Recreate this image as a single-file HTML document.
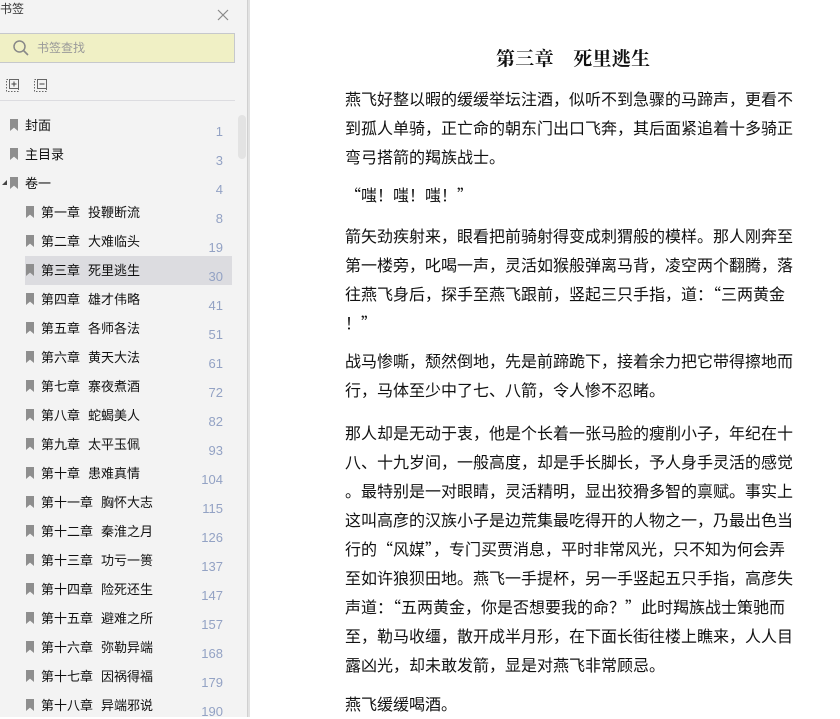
<!DOCTYPE html>
<html><head><meta charset="utf-8"><style>
*{margin:0;padding:0;box-sizing:border-box}
body{width:840px;height:717px;overflow:hidden;background:#fff;font-family:"Noto Sans CJK SC","Liberation Sans",sans-serif;position:relative}
#side{position:absolute;left:0;top:0;width:248px;height:717px;background:#f3f3f3;border-right:1px solid #d0d0d0}
#sep{position:absolute;left:248px;top:0;width:2px;height:717px;background:#e2e2e2}
.it{position:absolute;height:28px;font-size:13px;color:#111;line-height:28px;white-space:pre}
.it span{margin-left:8px}
.bm{position:absolute;top:8px;width:8px;height:12px;background:#8e8e8e;clip-path:polygon(0 0,100% 0,100% 100%,50% 72%,0 100%)}
.pn{position:absolute;right:24px;font-size:13px;color:#93a2c4;white-space:nowrap;font-family:"Liberation Sans",sans-serif}
#main{position:absolute;left:345px;top:0;width:460px;font-size:16px;color:#111;line-height:29px;white-space:nowrap}
p{position:absolute;left:0}
</style></head><body>
<div id="side">
<div style="position:absolute;left:0;top:0;font-size:12px;color:#333;line-height:18px">书签</div>
<div style="position:absolute;left:217px;top:2px;width:12px;height:12px">
<svg width="12" height="12"><path d="M1 1L11 11M11 1L1 11" stroke="#888" stroke-width="1.2"/></svg></div>
<div style="position:absolute;left:0;top:33px;width:235px;height:30px;background:#f0f0c5;border:1px solid #c6c8cc;border-left:none"></div>
<svg style="position:absolute;left:12px;top:39px" width="18" height="18"><circle cx="7.5" cy="7.5" r="5.5" fill="none" stroke="#888" stroke-width="1.5"/><path d="M11.5 11.5L16 16" stroke="#888" stroke-width="1.6"/></svg>
<div style="position:absolute;left:37px;top:39px;font-size:12px;color:#999">书签查找</div>
<svg style="position:absolute;left:5px;top:78px" width="50" height="16"><rect x="1.5" y="1.5" width="12" height="12" fill="none" stroke="#666" stroke-dasharray="1.5 1.5"/><rect x="4.5" y="1.5" width="9" height="9" fill="#f3f3f3" stroke="#666"/><path d="M6.5 6h5M9 3.5v5" stroke="#444"/><rect x="29.5" y="1.5" width="12" height="12" fill="none" stroke="#666" stroke-dasharray="1.5 1.5"/><rect x="32.5" y="1.5" width="9" height="9" fill="#f3f3f3" stroke="#666"/><path d="M34.5 6h5" stroke="#444"/></svg>
<div style="position:absolute;left:0;top:100px;width:235px;height:1px;background:#dcdce0"></div>
<div style="position:absolute;left:238px;top:115px;width:8px;height:44px;background:#e3e3e3;border-radius:4px"></div>
<div style="position:absolute;left:25px;top:256px;width:207px;height:29px;background:#dcdce0"></div>
<div id="items"></div>
</div>
<div id="sep"></div>
<div id="main">
<div style="position:absolute;left:151px;top:43px;font-size:19px;font-weight:bold;font-family:'Noto Serif CJK SC',serif;letter-spacing:0.3px">第三章　死里逃生</div>
<p style="top:84px">燕飞好整以暇的缓缓举坛注酒，似听不到急骤的马蹄声，更看不<br>到孤人单骑，正亡命的朝东门出口飞奔，其后面紧追着十多骑正<br>弯弓搭箭的羯族战士。</p>
<p style="top:180px">“嗤！嗤！嗤！”</p>
<p style="top:221px">箭矢劲疾射来，眼看把前骑射得变成刺猬般的模样。那人刚奔至<br>第一楼旁，叱喝一声，灵活如猴般弹离马背，凌空两个翻腾，落<br>往燕飞身后，探手至燕飞跟前，竖起三只手指，道：“三两黄金<br>！”</p>
<p style="top:346px">战马惨嘶，颓然倒地，先是前蹄跪下，接着余力把它带得擦地而<br>行，马体至少中了七、八箭，令人惨不忍睹。</p>
<p style="top:418px">那人却是无动于衷，他是个长着一张马脸的瘦削小子，年纪在十<br>八、十九岁间，一般高度，却是手长脚长，予人身手灵活的感觉<br>。最特别是一对眼睛，灵活精明，显出狡猾多智的禀赋。事实上<br>这叫高彦的汉族小子是边荒集最吃得开的人物之一，乃最出色当<br>行的“风媒”，专门买贾消息，平时非常风光，只不知为何会弄<br>至如许狼狈田地。燕飞一手提杯，另一手竖起五只手指，高彦失<br>声道：“五两黄金，你是否想要我的命？”此时羯族战士策驰而<br>至，勒马收缰，散开成半月形，在下面长街往楼上瞧来，人人目<br>露凶光，却未敢发箭，显是对燕飞非常顾忌。</p>
<p style="top:689px">燕飞缓缓喝酒。</p>
</div>
<script>
var d=[["封面","1",0],["主目录","3",0],["卷一","4",0],["第一章|投鞭断流","8",1],["第二章|大难临头","19",1],["第三章|死里逃生","30",1],["第四章|雄才伟略","41",1],["第五章|各师各法","51",1],["第六章|黄天大法","61",1],["第七章|寨夜煮酒","72",1],["第八章|蛇蝎美人","82",1],["第九章|太平玉佩","93",1],["第十章|患难真情","104",1],["第十一章|胸怀大志","115",1],["第十二章|秦淮之月","126",1],["第十三章|功亏一篑","137",1],["第十四章|险死还生","147",1],["第十五章|避难之所","157",1],["第十六章|弥勒异端","168",1],["第十七章|因祸得福","179",1],["第十八章|异端邪说","190",1]];
var h="";d.forEach(function(e,i){var y=111+i*29;var x=e[2]?41:25;var t=e[0].split("|");var txt=t.length>1?t[0]+'<span>'+t[1]+'</span>':t[0];
h+='<div class="it" style="left:'+x+'px;top:'+y+'px">'+txt+'</div><div class="bm" style="left:'+(x-15)+'px;top:'+(y+8)+'px"></div><div class="pn" style="top:'+(y+13)+'px">'+e[1]+'</div>';
if(i==2)h+='<div style="position:absolute;left:2px;top:'+(y+11)+'px;width:0;height:0;border-left:5px solid transparent;border-bottom:5px solid #444"></div>';});
document.getElementById("items").innerHTML=h;
</script>
</body></html>
